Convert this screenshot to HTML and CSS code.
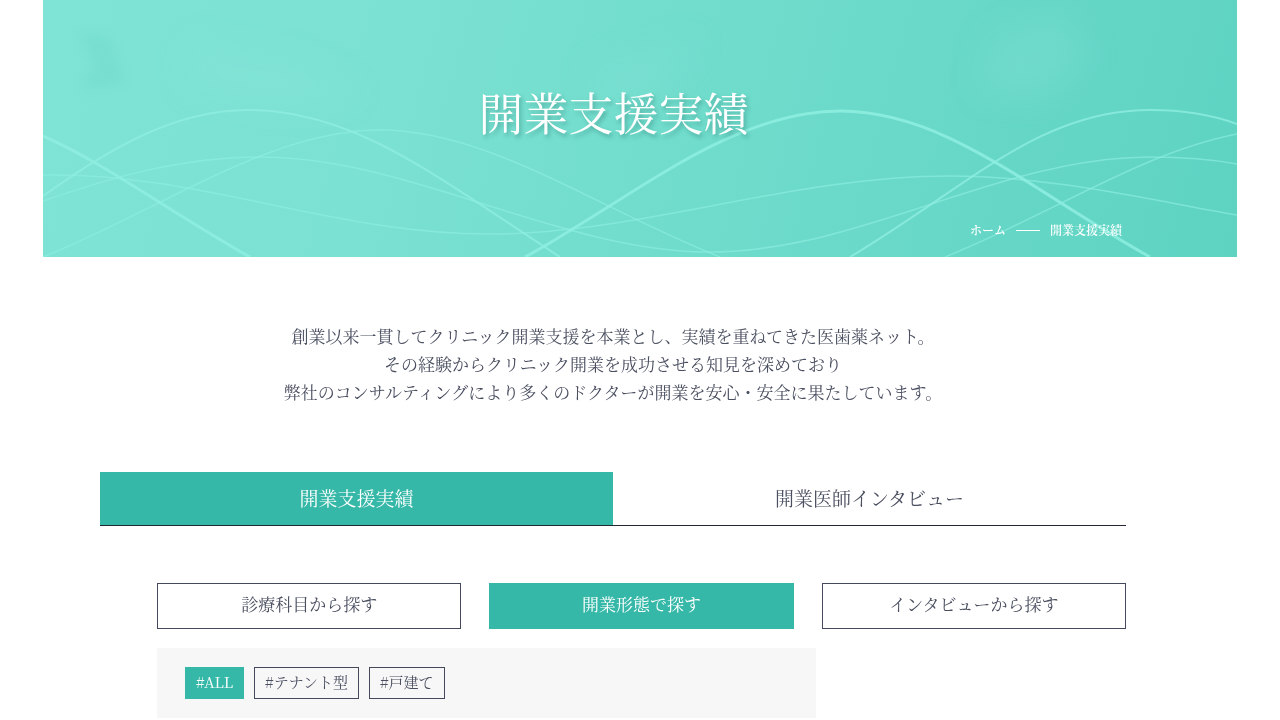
FILE: index.html
```html
<!DOCTYPE html>
<html lang="ja">
<head>
<meta charset="utf-8">
<meta name="viewport" content="width=device-width, initial-scale=1">
<title>開業支援実績</title>
<link rel="stylesheet" href="styles.css">
</head>
<body>
<header class="hero">
  <svg class="hero-art" viewBox="43 0 1194 257" preserveAspectRatio="none" aria-hidden="true">
    <defs>
      <filter id="soft" x="-50%" y="-50%" width="200%" height="200%"><feGaussianBlur stdDeviation="16"/></filter>
      <filter id="fine" x="-50%" y="-50%" width="200%" height="200%"><feGaussianBlur stdDeviation="6"/></filter>
    </defs>
    <path class="shade" filter="url(#fine)" d="M80 32l30 5 15 45-35 8-8-10 14-10z"/>
    <g filter="url(#soft)">
      <path class="glow" d="M190 45l110 20 60 30-80 10-90-20z"/>
      <path class="glow" d="M990 40l70-30 30 50-50 40-60-10z"/>
      <path class="glow" d="M590 70l110-30-40 50-60 15z"/>
    </g>
    <g class="waves">
      <path class="w2" d="M43 196C110 148 175 110 248 110C355 110 435 176 560 257"/>
      <path class="w2" d="M850 257C970 185 1040 110 1150 110C1182 110 1210 114 1237 124"/>
      <path class="w3" d="M43 136C103 162 170 212 250 257"/>
      <path class="w3" d="M525 257C630 200 730 111 840 111C945 111 1030 190 1150 257"/>
      <path d="M43 175C200 172 330 234 490 234C640 234 790 176 950 176C1050 176 1150 200 1237 215"/>
      <path d="M43 201C110 178 180 157 260 157C410 157 560 252 710 252C860 252 1000 157 1150 157C1180 157 1210 159 1237 164"/>
      <path d="M43 257C160 210 270 130 380 130C490 130 600 210 720 257"/>
      <path d="M945 257C1050 215 1140 153 1237 134"/>
    </g>
  </svg>
  <div class="hero-body">
    <h1 class="hero-title">開業支援実績</h1>
    <nav class="crumbs" aria-label="パンくず">
      <a href="#">ホーム</a><span class="crumb-line"></span><span>開業支援実績</span>
    </nav>
  </div>
</header>
<main class="main">
  <p class="lead">創業以来一貫してクリニック開業支援を本業とし、実績を重ねてきた医歯薬ネット。<br>その経験からクリニック開業を成功させる知見を深めており<br>弊社のコンサルティングにより多くのドクターが開業を安心・安全に果たしています。</p>
  <nav class="tabs">
    <a class="tab active" href="#">開業支援実績</a>
    <a class="tab" href="#">開業医師インタビュー</a>
  </nav>
  <section class="search">
    <div class="modes">
      <button class="mode" type="button">診療科目から探す</button>
      <button class="mode active" type="button">開業形態で探す</button>
      <button class="mode" type="button">インタビューから探す</button>
    </div>
    <div class="panel">
      <button class="tag active" type="button">#ALL</button>
      <button class="tag" type="button">#テナント型</button>
      <button class="tag" type="button">#戸建て</button>
    </div>
  </section>
</main>
</body>
</html>
```
FILE: styles.css
```css
* { box-sizing: border-box; }
body {
  margin: 0;
  background: #fff;
  color: #4a4f60;
  font-family: "Noto Serif CJK JP", "Noto Serif JP", "Liberation Serif", "Noto Sans CJK JP", serif;
  font-weight: 400;
}
a { color: inherit; text-decoration: none; }
button { font: inherit; color: inherit; margin: 0; cursor: pointer; }

.hero {
  display: grid;
  margin: 0 43px;
  background: linear-gradient(105deg, #7fe3d5 0%, #7be1d2 30%, #70dccc 55%, #66d7c7 80%, #5ed3c2 100%);
  color: #fff;
}
.hero-art, .hero-body { grid-area: 1 / 1; }
.hero-art { width: 100%; height: 100%; min-height: 0; contain: size; }
.shade { fill: #5fd0be; opacity: .2; }
.glow { fill: #8eeadd; opacity: .22; }
.waves { fill: none; stroke: #8eeee0; stroke-width: 1.5; stroke-opacity: .65; }
.w2 { stroke-width: 2; stroke-opacity: .8; }
.w3 { stroke-width: 3; stroke-opacity: .85; }
.hero-body {
  display: flex;
  flex-direction: column;
  padding: 78px 115px 15px 62px;
}
.hero-title {
  margin: 0;
  font-size: 45px;
  line-height: 68px;
  font-weight: 400;
  text-align: center;
  text-shadow: 2px 3px 4px rgba(40, 120, 110, .45);
}
.crumbs {
  display: flex;
  align-items: center;
  justify-content: flex-end;
  gap: 10px;
  margin-top: 72px;
  font-size: 12px;
  line-height: 24px;
  font-weight: 600;
}
.crumb-line { width: 24px; height: 1px; background: #fff; }

.main { padding: 65px 154px 0 100px; }
.lead {
  margin: 0;
  font-size: 17px;
  line-height: 28px;
  text-align: center;
}
.tabs {
  display: grid;
  grid-template-columns: 1fr 1fr;
  margin-top: 66px;
  border-bottom: 1px solid #222832;
}
.tab {
  padding: 11px 12px 13px;
  font-size: 19px;
  line-height: 29px;
  text-align: center;
}
.tab.active { background: #36b8a8; color: #fff; }
.search { margin: 57px 0 0 57px; }
.modes {
  display: grid;
  grid-template-columns: repeat(3, 1fr);
  gap: 28px;
}
.mode {
  padding: 8px 8px 12px;
  border: 1px solid #43485a;
  background: #fff;
  font-size: 17px;
  line-height: 24px;
}
.mode.active, .tag.active { border-color: #36b8a8; background: #36b8a8; color: #fff; }
.panel {
  display: flex;
  flex-wrap: wrap;
  gap: 10px;
  width: 68%;
  margin-top: 19px;
  padding: 19px 28px;
  background: #f7f7f7;
}
.tag {
  padding: 2px 10px 4px;
  border: 1px solid #43485a;
  background: transparent;
  font-size: 15px;
  line-height: 24px;
}
```
